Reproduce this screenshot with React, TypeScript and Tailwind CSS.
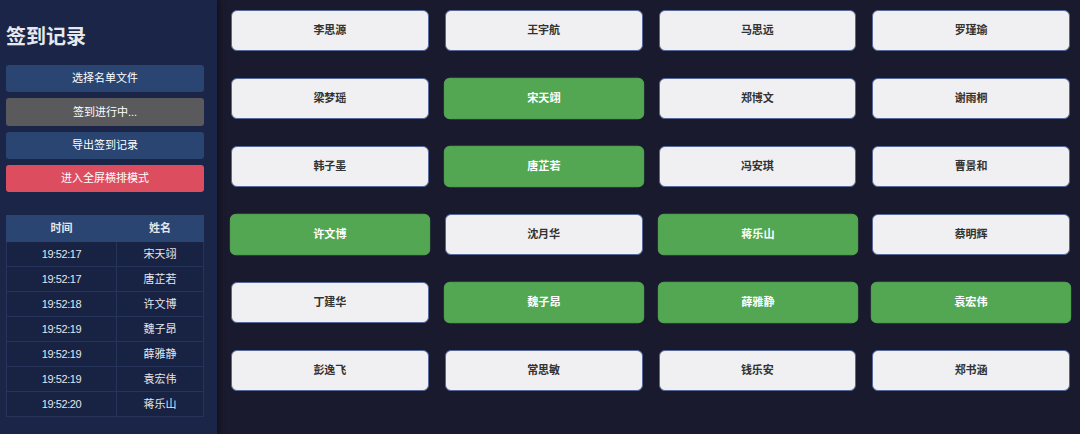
import React from "react";

const FONT = { fontFamily: '"Liberation Sans", "Noto Sans CJK SC", sans-serif' };

const names: [string, boolean][] = [
  ["李思源", false], ["王宇航", false], ["马思远", false], ["罗瑾瑜", false],
  ["梁梦瑶", false], ["宋天翊", true], ["郑博文", false], ["谢雨桐", false],
  ["韩子墨", false], ["唐芷若", true], ["冯安琪", false], ["曹景和", false],
  ["许文博", true], ["沈月华", false], ["蒋乐山", true], ["蔡明辉", false],
  ["丁建华", false], ["魏子昂", true], ["薛雅静", true], ["袁宏伟", true],
  ["彭逸飞", false], ["常思敏", false], ["钱乐安", false], ["郑书涵", false],
];

const records = [
  ["19:52:17", "宋天翊"],
  ["19:52:17", "唐芷若"],
  ["19:52:18", "许文博"],
  ["19:52:19", "魏子昂"],
  ["19:52:19", "薛雅静"],
  ["19:52:19", "袁宏伟"],
  ["19:52:20", "蒋乐山"],
];

export default function App() {
  return (
    <div className="flex w-[1080px] h-[434px] overflow-hidden bg-[#1a1a2e]" style={FONT}>
      <aside className="w-[217px] shrink-0 bg-[#1a2547] pl-[6px] pr-[13px] pt-[25px] shadow-[2px_0_6px_rgba(0,0,0,0.45)] z-10">
        <h1 className="text-[20px] leading-[24px] font-bold text-[#e6e8ee] mb-[16px]">签到记录</h1>
        <div className="flex flex-col gap-[6px]">
          <button className="h-[27px] rounded-[3px] bg-[#2a4571] text-white text-[11px]">选择名单文件</button>
          <button className="h-[28px] rounded-[3px] bg-[#5a5a5c] text-white text-[11px]">签到进行中...</button>
          <button className="h-[27px] rounded-[3px] bg-[#2a4571] text-white text-[11px]">导出签到记录</button>
          <button className="h-[27px] rounded-[3px] bg-[#dc4d5f] text-white text-[11px]">进入全屏横排模式</button>
        </div>
        <table className="mt-[23px] w-full border-collapse text-[11px] text-[#e4e6ec]">
          <thead>
            <tr className="bg-[#2a4571] h-[26px]">
              <th className="font-bold w-[110px] border border-[#2a4571]">时间</th>
              <th className="font-bold border border-[#2a4571]">姓名</th>
            </tr>
          </thead>
          <tbody>
            {records.map(([t, n], i) => (
              <tr key={i} className="h-[25px] bg-[#182243]">
                <td className="text-center border border-[#26345c] tracking-[-0.4px]">{t}</td>
                <td className="text-center border border-[#26345c]">{n}</td>
              </tr>
            ))}
          </tbody>
        </table>
      </aside>
      <main className="flex-1 pl-[14px] pr-[10px] pt-[10px]">
        <div className="grid grid-cols-4 gap-x-[16px] gap-y-[27px]">
          {names.map(([n, on]) => (
            <div
              key={n}
              className={
                on
                  ? "h-[41px] flex items-center justify-center rounded-[6px] bg-[#53a752] border border-[#53a752] text-white text-[11px] font-bold scale-[1.012]"
                  : "h-[41px] flex items-center justify-center rounded-[6px] bg-[#f0f0f2] border-[1.5px] border-[#56699a] text-[#333333] text-[11px] font-bold"
              }
            >
              {n}
            </div>
          ))}
        </div>
      </main>
    </div>
  );
}
